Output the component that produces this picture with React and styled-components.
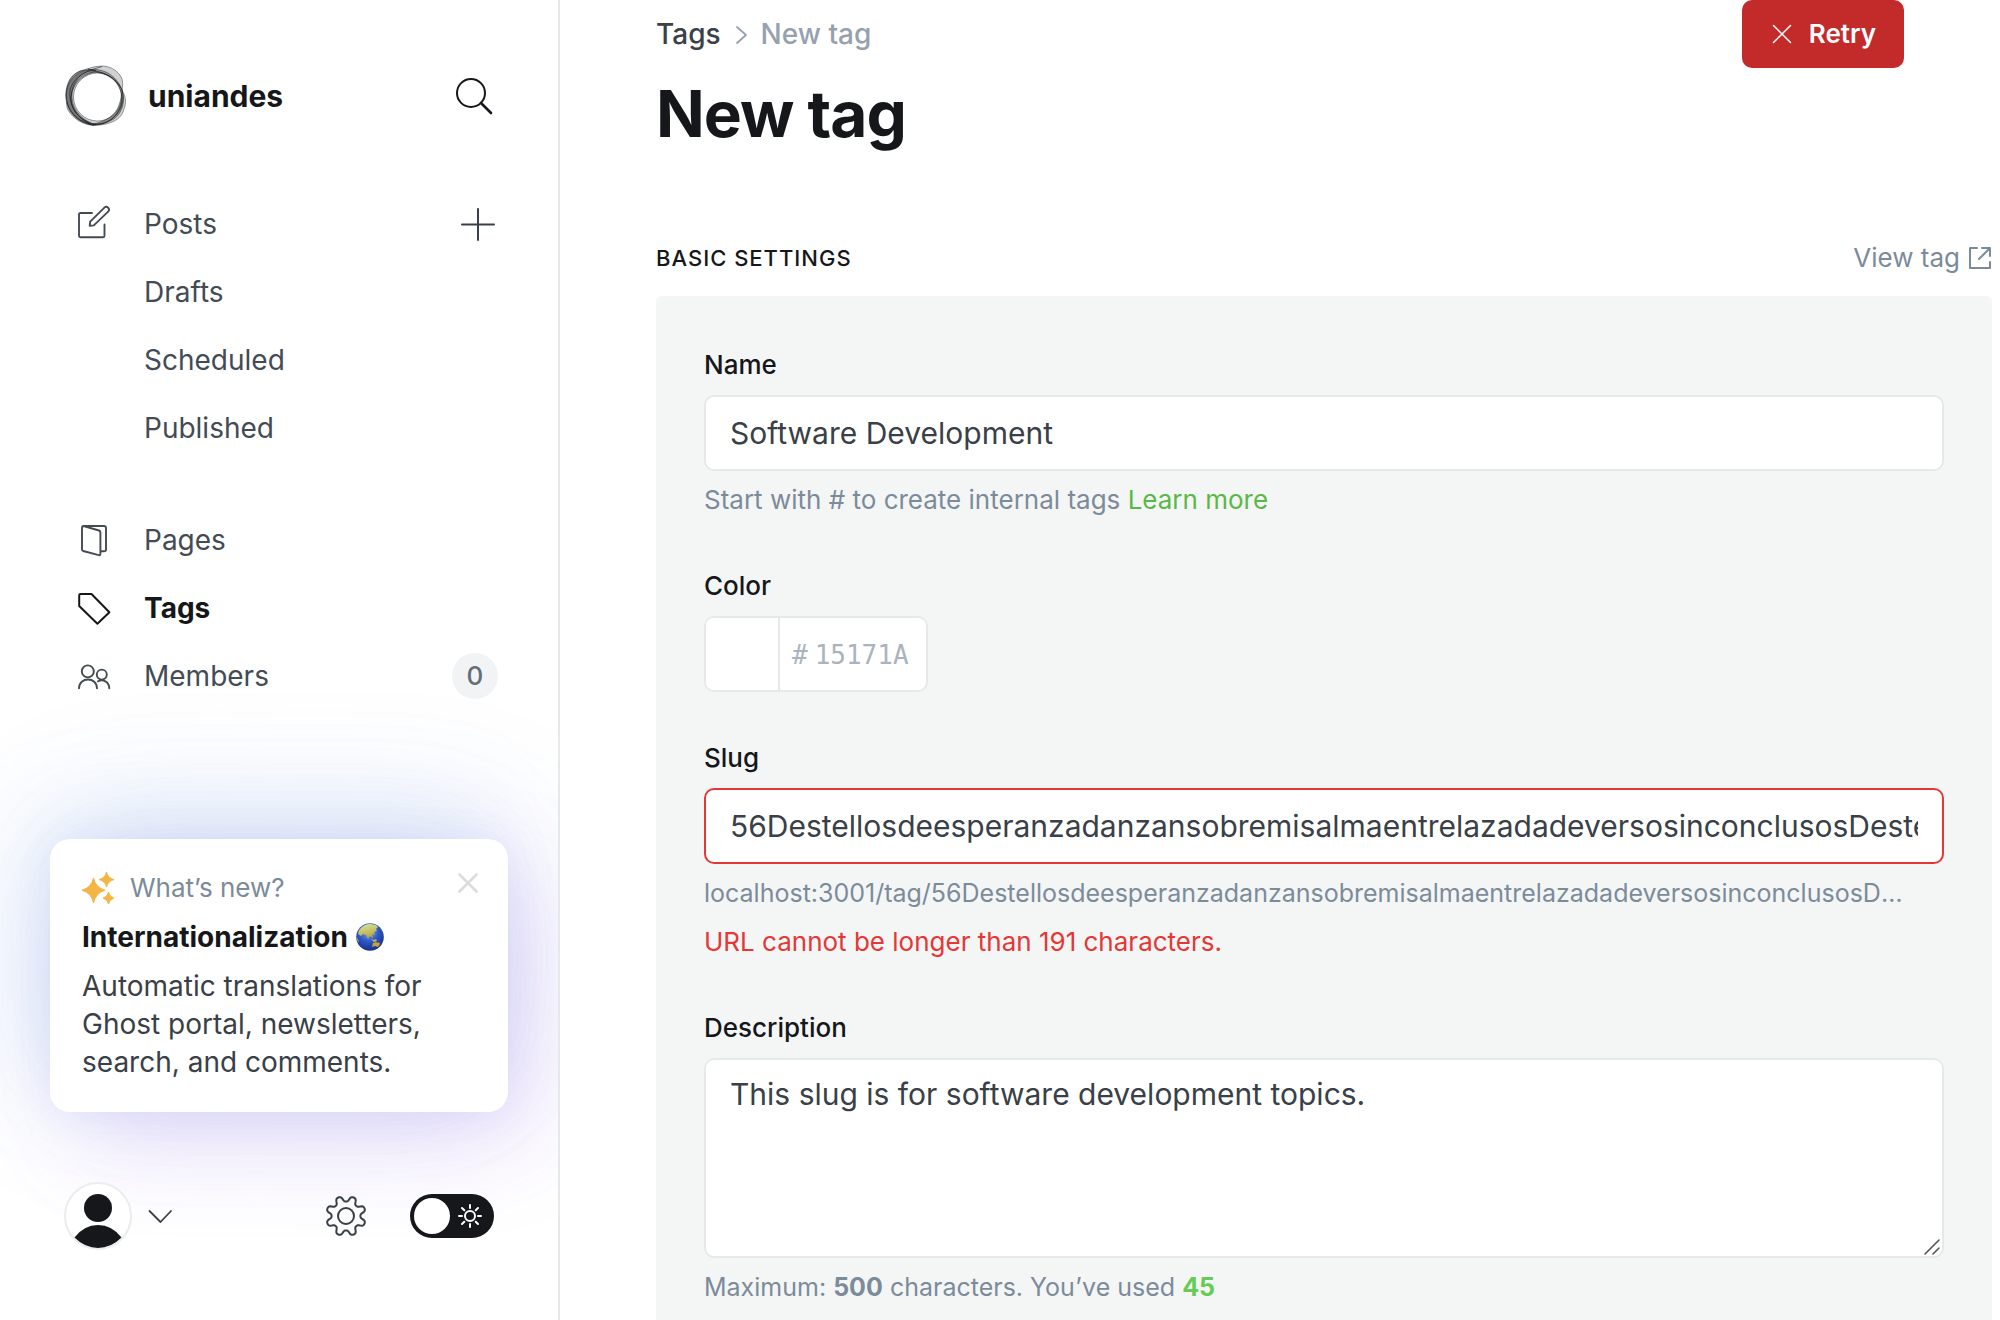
import React, { useState } from "react";
import styled, { createGlobalStyle, css } from "styled-components";

const color = {
  ink: "#15171a",
  text: "#394047",
  nav: "#434b54",
  muted: "#7c8b9a",
  faint: "#95a1ad",
  line: "#e6e9eb",
  panel: "#f4f6f6",
  green: "#5ab946",
  greenBright: "#66cc55",
  red: "#e53735",
  redDark: "#c32a2a",
};

const GlobalStyle = createGlobalStyle`
  *, *::before, *::after { box-sizing: border-box; }
  body {
    margin: 0;
    background: #fff;
    color: ${color.text};
    font-family: Inter, "Liberation Sans", sans-serif;
    font-size: 26px;
    line-height: 38px;
    -webkit-font-smoothing: antialiased;
  }
  button, input, textarea { font: inherit; color: inherit; }
  a { color: inherit; text-decoration: none; }
`;

const Layout = styled.div`
  display: grid;
  grid-template-columns: 560px minmax(0, 1fr);
  grid-template-rows: minmax(0, 1fr);
  height: 100vh;
  overflow: hidden;
`;

const Sidebar = styled.aside`
  display: flex;
  flex-direction: column;
  min-height: 0;
  overflow: hidden;
  border-right: 2px solid ${color.line};
`;

const Brand = styled.header`
  display: flex;
  align-items: center;
  gap: 20px;
  padding: 62px 66px 60px 64px;
  color: ${color.ink};
  font-size: 30px;
  font-weight: 700;

  svg:first-child { margin: 2px 0; }
`;

const BrandName = styled.span`
  flex: 1;
`;

const IconButton = styled.button`
  display: inline-flex;
  align-items: center;
  justify-content: center;
  padding: 0;
  border: 0;
  background: none;
  color: ${(p) => p.$tone || color.text};
  cursor: pointer;
`;

const Icon = styled.svg`
  display: block;
  flex: none;
  overflow: visible;
  fill: none;
  stroke: currentColor;
  stroke-width: ${(p) => p.$weight || 2};
  stroke-linecap: round;
  stroke-linejoin: round;
`;

const Nav = styled.nav`
  display: flex;
  flex-direction: column;
  gap: 44px;
`;

const NavGroup = styled.ul`
  margin: 0;
  padding: 0;
  list-style: none;
`;

const NavRow = styled.li`
  display: flex;
  align-items: center;
  justify-content: space-between;
  height: 68px;
  padding: 0 60px 0 78px;
`;

const NavLink = styled.a`
  display: grid;
  grid-template-columns: 32px auto;
  align-items: center;
  gap: 34px;
  color: ${color.nav};
  font-size: 28px;

  ${(p) => p.$active && css`
    color: ${color.ink};
    font-weight: 700;
  `}
`;

const NavText = styled.span`
  grid-column: 2;
`;

const Count = styled.span`
  min-width: 46px;
  height: 46px;
  border-radius: 23px;
  background: #f1f3f4;
  color: #626d79;
  font-size: 26px;
  font-weight: 500;
  line-height: 46px;
  text-align: center;
`;

const News = styled.section`
  display: flex;
  flex-direction: column;
  gap: 11px;
  margin: auto 50px 70px;
  padding: 30px 30px 31px 32px;
  border-radius: 20px;
  background: #fff;
  box-shadow:
    0 0 40px rgba(90, 100, 220, 0.06),
    -20px -24px 100px rgba(110, 190, 230, 0.14),
    28px 32px 100px rgba(165, 95, 235, 0.16),
    0 -16px 140px rgba(90, 115, 220, 0.16);
`;

const NewsHead = styled.div`
  display: flex;
  align-items: center;
  gap: 16px;
  color: ${color.muted};

  span { flex: 1; }
  button { align-self: flex-start; padding: 4px 0; }
`;

const NewsTitle = styled.h2`
  display: flex;
  align-items: center;
  gap: 8px;
  margin: 0;
  color: ${color.ink};
  font-size: 28px;
  font-weight: 700;
  line-height: 38px;
`;

const NewsText = styled.p`
  margin: 0;
  font-size: 28px;
`;

const Footer = styled.footer`
  display: flex;
  align-items: center;
  padding: 0 64px 70px;
`;

const UserButton = styled(IconButton)`
  gap: 16px;
  margin-right: auto;
`;

const Toggle = styled.label`
  display: flex;
  align-items: center;
  gap: 8px;
  width: 84px;
  height: 44px;
  margin-left: 44px;
  padding: 4px;
  border-radius: 22px;
  background: ${color.ink};
  color: #fff;
  cursor: pointer;

  input {
    appearance: none;
    width: 36px;
    height: 36px;
    margin: 0;
    border-radius: 50%;
    background: #fff;
  }
`;

const Main = styled.main`
  min-width: 0;
  padding: 0 8px 0 96px;
  overflow-y: auto;
  scrollbar-width: none;
`;

const PageHeader = styled.header`
  display: flex;
  align-items: flex-start;
  justify-content: space-between;
  padding-right: 88px;
`;

const Crumbs = styled.nav`
  display: flex;
  align-items: center;
  gap: 14px;
  padding-top: 15px;
  color: ${color.faint};
  font-size: 28px;
  font-weight: 500;

  a { color: ${color.text}; }
`;

const PageTitle = styled.h1`
  margin: 19px 0 0;
  color: ${color.ink};
  font-size: 64px;
  font-weight: 700;
  line-height: 84px;
  letter-spacing: -1px;
`;

const RetryButton = styled.button`
  display: flex;
  align-items: center;
  gap: 17px;
  height: 68px;
  padding: 0 28px 0 30px;
  border: 0;
  border-radius: 10px;
  background: ${color.redDark};
  color: #fff;
  font-size: 26px;
  font-weight: 600;
  cursor: pointer;
`;

const SectionHead = styled.div`
  display: flex;
  align-items: center;
  justify-content: space-between;
  padding: 83px 0 19px;
`;

const SectionTitle = styled.h2`
  margin: 0;
  color: ${color.ink};
  font-size: 22px;
  font-weight: 500;
  letter-spacing: 1px;
  text-transform: uppercase;
`;

const ViewLink = styled.a`
  display: flex;
  align-items: center;
  gap: 8px;
  color: ${color.muted};
`;

const Panel = styled.form`
  display: flex;
  flex-direction: column;
  gap: 50px;
  padding: 53px 48px;
  border-radius: 6px;
  background: ${color.panel};
`;

const Field = styled.div`
  min-width: 0;
`;

const Label = styled.label`
  display: block;
  margin-bottom: 14px;
  color: ${color.ink};
  font-size: 26px;
  font-weight: 500;
  line-height: 32px;
`;

const box = css`
  display: block;
  border: 2px solid ${(p) => (p.$invalid ? color.red : color.line)};
  border-radius: 10px;
  background: #fff;
  outline: none;
`;

const TextInput = styled.input`
  ${box}
  width: 100%;
  height: 76px;
  padding: 0 24px;
  font-size: 30px;
`;

const AreaWrap = styled.div`
  position: relative;

  svg {
    position: absolute;
    right: 4px;
    bottom: 3px;
    pointer-events: none;
    color: #555;
  }
`;

const TextArea = styled.textarea`
  ${box}
  width: 100%;
  height: 200px;
  padding: 14px 24px;
  font-size: 30px;
  line-height: 40px;
  resize: none;
`;

const Help = styled.p`
  margin: 10px 0 1px;
  padding-right: 32px;
  overflow: hidden;
  color: ${(p) => (p.$error ? color.red : color.muted)};
  font-size: ${(p) => (p.$compact ? 25 : 26)}px;
  text-overflow: ellipsis;
  white-space: nowrap;

  & + & { margin-top: 11px; }
  a { color: ${color.green}; }
`;

const Used = styled.strong`
  color: ${color.greenBright};
`;

const ColorBox = styled.div`
  ${box}
  display: inline-grid;
  grid-template-columns: 74px 146px;
  height: 76px;
  vertical-align: top;
  overflow: hidden;
`;

const Swatch = styled.input`
  appearance: none;
  width: 100%;
  height: 100%;
  padding: 0;
  border: 0;
  border-right: 2px solid ${color.line};
  background: #fff;

  &::-webkit-color-swatch-wrapper { padding: 0; }
  &::-webkit-color-swatch { border: 0; }
`;

const HexEntry = styled.div`
  display: flex;
  align-items: center;
  gap: 7px;
  padding: 2px 0 0 12px;
  color: #abb4be;
  font-family: "DejaVu Sans Mono", monospace;
  font-size: 26px;

  input {
    width: 100%;
    padding: 0;
    border: 0;
    outline: none;
    background: none;
  }
  input::placeholder { color: #abb4be; opacity: 1; }
`;

const LogoMark = () => (
  <svg width="64" height="64" viewBox="0 0 64 64" aria-hidden="true">
    <g fill="#15171a" fillRule="evenodd" stroke="#15171a" strokeWidth="0.7" strokeOpacity="0.6">
      <path
        fillOpacity="0.2"
        d="M38 2C48 2 57 9 58.500 17C59 20 58 24 58.300 27C62 33 62.500 39 60 45C58 54 50 60 32 61.500C20 61.500 9 55 4 46C2 42 3 38 1.800 34C1 24 5 12 16 7C24 5 29 2 38 2ZM33.500 9A24 24 0 1 0 33.500 57A24 24 0 1 0 33.500 9Z"
      />
      <path
        fillOpacity="0.3"
        d="M26 5.500C12 7 2 18 2.300 32C2.500 48 16 61 32 61C20 57 8.500 48 8 33C7.500 20 16 10 29 8C40 7 51 13 58 26C54 14 42 4 26 5.500Z"
      />
      <path
        fillOpacity="0.35"
        d="M58 26C62 38 58 52 46 57C40 60 34 61 29 60C41 58 52 51 55 41C57 36 57.500 31 58 26Z"
      />
      <path
        fillOpacity="0.25"
        d="M6 15C1 24 1 38 6 47C11 55 20 60 30 61.500C18 57 9.500 49 7.500 38C6 29 9 19 16 12C20 8 26 6.500 32 7C22 4 11 7 6 15Z"
      />
    </g>
    <g fill="none" stroke="#15171a" strokeOpacity="0.65" strokeWidth="0.9">
      <path d="M30 8C18 11 8 20 7 33C6 45 15 56 30 60C46 61 57 49 58 35C58 22 48 9 30 8Z" />
      <path d="M24 5C38 8 52 12 58 26C62 40 54 55 38 60C22 63 6 52 3 38" />
      <path d="M38 2.500C26 6 12 10 6.500 24C3 40 14 55 27 60" />
    </g>
  </svg>
);

const SearchIcon = () => (
  <Icon width="36" height="36" viewBox="0 0 36 36"><circle cx="15" cy="15" r="14" /><path d="M25 25l10 10" strokeWidth="2.6" /></Icon>
);
const PlusIcon = () => (
  <Icon width="40" height="40" viewBox="0 0 40 40"><path d="M20 5v31M4 20.5h32" /></Icon>
);
const EditIcon = () => (
  <Icon width="32" height="32" viewBox="0 0 32 32" $weight={1.9}>
    <path d="M14 5H2.5Q1 5 1 6.5V27.800Q1 29.300 2.500 29.300H25Q26.500 29.300 26.500 27.800V16.500" />
    <path d="M11.700 17.700L12.200 13.600L26.400 -0.400Q28.500 -2 30.300 -0.200Q31.800 1.600 30.400 3.400L15.800 17.400Z" />
  </Icon>
);
const PagesIcon = () => (
  <Icon width="32" height="32" viewBox="0 0 32 32" $weight={1.900}>
    <path d="M5.500 2L21 6.500Q22.400 7 22.400 8.400V30Q22.400 31.600 20.800 31.200L5.200 27Q4 26.600 4 25.400V3.400Q4 2 5.500 2H26Q28 2 28 4V25.400Q28 27.200 26 27.200H22.600" />
  </Icon>
);
const TagIcon = () => (
  <Icon width="32" height="32" viewBox="0 0 32 32">
    <path d="M2.500 2H13.500L31.400 20.200L19.400 31.800L1.200 14V3.400Q1.200 2 2.500 2Z" />
  </Icon>
);
const MembersIcon = () => (
  <Icon width="32" height="32" viewBox="0 0 32 32" $weight={1.900}>
    <circle cx="9.800" cy="11.400" r="6" /><circle cx="23.800" cy="14.600" r="5" />
    <path d="M1 28.300C1 16.500 19 16.500 19 28.300M20 21.300C25 18.800 31 21.500 31.300 28.300" />
  </Icon>
);
const CloseIcon = () => (
  <Icon width="20" height="20" viewBox="0 0 20 20" $weight={2.800}><path d="M1.500 1.500l17 17M18.500 1.500l-17 17" /></Icon>
);
const SparkleIcon = () => (
  <svg width="32" height="32" viewBox="0 0 32 32" fill="#f5b544" aria-hidden="true">
    <path d="M11.500 6Q13.500 15.500 23 18.200Q13.500 21 11.500 31Q9.500 21 0 18.200Q9.500 15.500 11.500 6Z" stroke="#f5b544" />
    <path d="M24.500 0Q25.700 6 32 7.600Q25.700 9.200 24.500 15Q23.300 9.200 17 7.600Q23.300 6 24.500 0Z" stroke="#f5b544" />
    <path d="M26.500 20Q27.400 25 32 26.200Q27.400 27.400 26.500 32Q25.600 27.400 21 26.200Q25.600 25 26.500 20Z" stroke="#f5b544" />
  </svg>
);
const GlobeIcon = () => (
  <svg width="28" height="28" viewBox="0 0 28 28" aria-hidden="true">
    <defs>
      <radialGradient id="sea" cx="0.45" cy="0.3" r="0.75">
        <stop offset="0" stopColor="#7da6e8" /><stop offset="0.5" stopColor="#2c56c4" /><stop offset="1" stopColor="#142a80" />
      </radialGradient>
      <linearGradient id="land" x1="0" y1="0" x2="0.3" y2="1">
        <stop offset="0" stopColor="#dce89c" /><stop offset="1" stopColor="#b6a53c" />
      </linearGradient>
    </defs>
    <circle cx="14" cy="14" r="13.800" fill="url(#sea)" />
    <path d="M4 6Q9 0.500 16 1.200Q21 2 22 4L20 6L21 8L18 9L19 12L16 11L17 15L14 13L12 16L10 12L7 11L5 13L2 11Q2 8 4 6Z" fill="url(#land)" />
    <path d="M15 16l3 1 2-1 1 2-3 1zM1 14q1 3 2 4l-1 1q-1-2-1-5z" fill="#b9bd55" />
    <path d="M17 20l3-1 2 1 1-1 1 2-2 3-3-1-3 1z" fill="#c9a235" />
  </svg>
);
const AvatarIcon = () => (
  <svg width="68" height="68" viewBox="0 0 68 68" aria-hidden="true">
    <circle cx="34" cy="34" r="33" fill="#fff" stroke="#ebeced" strokeWidth="2" />
    <circle cx="34" cy="26" r="14" fill="#15171a" />
    <path d="M10.500 55.500Q20 43 34 43Q48 43 57.500 55.500Q47 66 34 66Q21 66 10.500 55.500Z" fill="#15171a" />
  </svg>
);
const ChevronIcon = () => (
  <Icon width="24" height="24" viewBox="0 0 24 24" $weight={1.800}><path d="M1.500 7L12.500 18L23 7" /></Icon>
);
const GearIcon = () => {
  const points = [];
  for (let i = 0; i <= 160; i += 1) {
    const a = (i / 160) * Math.PI * 2;
    const w = Math.tanh(1.6 * Math.cos(8 * (a - Math.PI / 8))) / Math.tanh(1.6);
    const r = 17.200 + 2.800 * w;
    points.push(`${(20 + r * Math.cos(a)).toFixed(2)} ${(20 + r * Math.sin(a)).toFixed(2)}`);
  }
  return (
    <Icon width="40" height="40" viewBox="0 0 40 40"><path d={`M${points.join("L")}Z`} /><circle cx="20" cy="20" r="8" /></Icon>
  );
};
const SunIcon = () => (
  <Icon width="24" height="24" viewBox="0 0 24 24">
    <circle cx="12" cy="12" r="5" />
    <path d="M12 1v3M12 20v3M1 12h3M20 12h3M4 4l2.300 2.300M17.700 17.700L20 20M4 20l2.300-2.300M17.700 6.300L20 4" />
  </Icon>
);
const CrumbIcon = () => (
  <Icon width="12" height="18" viewBox="0 0 12 18" $weight={1.800}><path d="M2 2L11 10L2 18" /></Icon>
);
const RetryIcon = () => (
  <Icon width="20" height="20" viewBox="0 0 20 20" $weight={1.500}><path d="M1.500 1.500l17 17M18.500 1.500l-17 17" /></Icon>
);
const ExternalIcon = () => (
  <Icon width="24" height="24" viewBox="0 0 24 24" $weight={2}>
    <path d="M9 2H2V22H22V16M14 2H22V10M22 2L11 13" />
  </Icon>
);
const GripIcon = () => (
  <Icon width="16" height="16" viewBox="0 0 16 16" $weight={1.600}><path d="M1 15L15 1M9 15l6-6" /></Icon>
);

const POEM = "Destellosdeesperanzadanzansobremisalmaentrelazadadeversosinconclusos";
const SLUG = `56${POEM}${POEM}${POEM}`;

export default function App() {
  const [name, setName] = useState("Software Development");
  const [slug, setSlug] = useState(SLUG);
  const [description, setDescription] = useState("This slug is for software development topics.");
  const [dark, setDark] = useState(false);

  return (
    <>
      <GlobalStyle />
      <Layout>
        <Sidebar>
          <Brand>
            <LogoMark />
            <BrandName>uniandes</BrandName>
            <IconButton type="button" aria-label="Search" $tone={color.ink}><SearchIcon /></IconButton>
          </Brand>
          <Nav aria-label="Main">
            <NavGroup>
              <NavRow>
                <NavLink href="#posts"><EditIcon /><NavText>Posts</NavText></NavLink>
                <IconButton type="button" aria-label="New post"><PlusIcon /></IconButton>
              </NavRow>
              {["Drafts", "Scheduled", "Published"].map((item) => (
                <NavRow key={item}>
                  <NavLink href={`#${item.toLowerCase()}`}><NavText>{item}</NavText></NavLink>
                </NavRow>
              ))}
            </NavGroup>
            <NavGroup>
              <NavRow><NavLink href="#pages"><PagesIcon /><NavText>Pages</NavText></NavLink></NavRow>
              <NavRow><NavLink href="#tags" $active aria-current="page"><TagIcon /><NavText>Tags</NavText></NavLink></NavRow>
              <NavRow>
                <NavLink href="#members"><MembersIcon /><NavText>Members</NavText></NavLink>
                <Count>0</Count>
              </NavRow>
            </NavGroup>
          </Nav>
          <News>
            <NewsHead>
              <SparkleIcon />
              <span>What’s new?</span>
              <IconButton type="button" aria-label="Dismiss" $tone="#dcdddf"><CloseIcon /></IconButton>
            </NewsHead>
            <NewsTitle>Internationalization <GlobeIcon /></NewsTitle>
            <NewsText>Automatic translations for Ghost portal, newsletters, search, and comments.</NewsText>
          </News>
          <Footer>
            <UserButton type="button" aria-label="Account"><AvatarIcon /><ChevronIcon /></UserButton>
            <IconButton type="button" aria-label="Settings"><GearIcon /></IconButton>
            <Toggle>
              <input type="checkbox" aria-label="Night shift" checked={dark} onChange={(e) => setDark(e.target.checked)} />
              <SunIcon />
            </Toggle>
          </Footer>
        </Sidebar>

        <Main>
          <PageHeader>
            <div>
              <Crumbs aria-label="Breadcrumb"><a href="#tags">Tags</a><CrumbIcon /><span>New tag</span></Crumbs>
              <PageTitle>New tag</PageTitle>
            </div>
            <RetryButton type="button"><RetryIcon />Retry</RetryButton>
          </PageHeader>
          <SectionHead>
            <SectionTitle>Basic settings</SectionTitle>
            <ViewLink href="#view">View tag<ExternalIcon /></ViewLink>
          </SectionHead>
          <Panel>
            <Field>
              <Label htmlFor="tag-name">Name</Label>
              <TextInput id="tag-name" type="text" value={name} onChange={(e) => setName(e.target.value)} />
              <Help>Start with # to create internal tags <a href="#learn">Learn more</a></Help>
            </Field>
            <Field>
              <Label htmlFor="tag-color">Color</Label>
              <ColorBox>
                <Swatch type="color" aria-label="Pick a color" defaultValue="#ffffff" />
                <HexEntry><span>#</span><input id="tag-color" type="text" placeholder="15171A" maxLength={6} /></HexEntry>
              </ColorBox>
            </Field>
            <Field>
              <Label htmlFor="tag-slug">Slug</Label>
              <TextInput id="tag-slug" type="text" $invalid aria-invalid="true" value={slug} onChange={(e) => setSlug(e.target.value)} />
              <Help $compact>localhost:3001/tag/{slug}</Help>
              <Help $error>URL cannot be longer than 191 characters.</Help>
            </Field>
            <Field>
              <Label htmlFor="tag-description">Description</Label>
              <AreaWrap>
                <TextArea id="tag-description" value={description} onChange={(e) => setDescription(e.target.value)} />
                <GripIcon />
              </AreaWrap>
              <Help $compact>Maximum: <strong>500</strong> characters. You’ve used <Used>{description.length}</Used></Help>
            </Field>
          </Panel>
        </Main>
      </Layout>
    </>
  );
}
